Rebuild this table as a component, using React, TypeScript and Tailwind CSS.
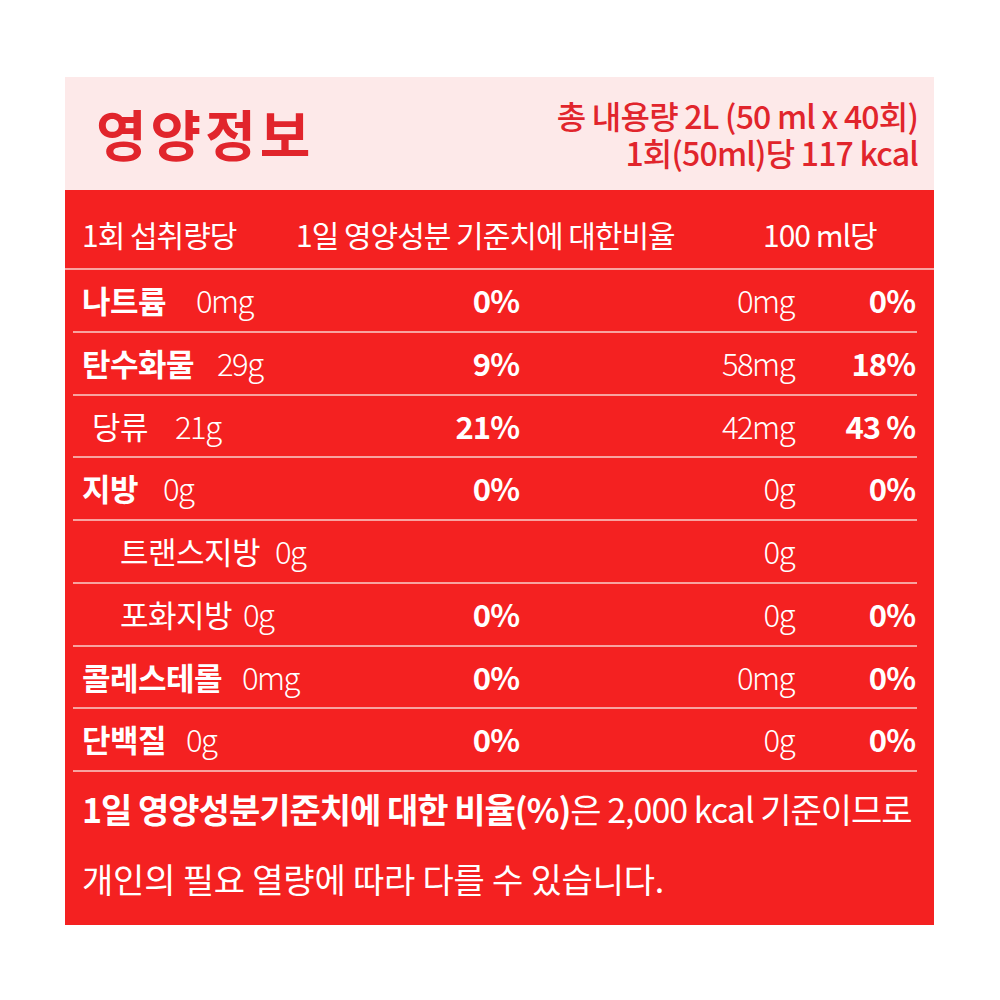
import React from "react";

const FONT = { fontFamily: '"Noto Sans CJK KR", "Noto Sans", sans-serif' };

type Row = {
  name: string;
  amount: string;
  pct: string;
  per100: string;
  pct2: string;
  indent: string;
  nameW: string;
  bold: boolean;
};

const rows: Row[] = [
  { name: "나트륨", amount: "0mg", pct: "0%", per100: "0mg", pct2: "0%", indent: "pl-[9px]", nameW: "w-[114px]", bold: true },
  { name: "탄수화물", amount: "29g", pct: "9%", per100: "58mg", pct2: "18%", indent: "pl-[9px]", nameW: "w-[135px]", bold: true },
  { name: "당류", amount: "21g", pct: "21%", per100: "42mg", pct2: "43 %", indent: "pl-[19px]", nameW: "w-[83px]", bold: false },
  { name: "지방", amount: "0g", pct: "0%", per100: "0g", pct2: "0%", indent: "pl-[9px]", nameW: "w-[81px]", bold: true },
  { name: "트랜스지방", amount: "0g", pct: "", per100: "0g", pct2: "", indent: "pl-[47px]", nameW: "w-[155px]", bold: false },
  { name: "포화지방", amount: "0g", pct: "0%", per100: "0g", pct2: "0%", indent: "pl-[47px]", nameW: "w-[123px]", bold: false },
  { name: "콜레스테롤", amount: "0mg", pct: "0%", per100: "0mg", pct2: "0%", indent: "pl-[9px]", nameW: "w-[160px]", bold: true },
  { name: "단백질", amount: "0g", pct: "0%", per100: "0g", pct2: "0%", indent: "pl-[9px]", nameW: "w-[104px]", bold: true },
];

export default function App() {
  return (
    <div className="w-[1000px] h-[1000px] bg-white pt-[77px] pl-[65px]" style={FONT}>
      <div className="w-[869px] h-[848px] flex flex-col bg-[#f42121]">
        <div className="h-[113px] shrink-0 bg-[#fde9e9] flex items-center justify-between pl-[31px] pr-[16px]">
          <div className="text-[55px] font-bold text-[#e1252c] tracking-[4px] leading-none pb-[2px]">영양정보</div>
          <div className="text-right text-[#e1252c] font-medium text-[32px] leading-[37px] tracking-[-0.8px]">
            <div>총 내용량 2L (50 ml x 40회)</div>
            <div>1회(50ml)당 117 kcal</div>
          </div>
        </div>
        <div className="h-[80px] shrink-0 flex items-center text-white text-[30px] tracking-[-1px] pl-[17px] pt-[10px] border-b-[2px] border-[#f8a3a0]">
          <div className="w-[214px] whitespace-nowrap">1회 섭취량당</div>
          <div className="w-[467px] whitespace-nowrap">1일 영양성분 기준치에 대한비율</div>
          <div className="whitespace-nowrap">100 ml당</div>
        </div>
        <div className="ml-[8px] mr-[17px] flex flex-col">
          {rows.map((r, i) => (
            <div
              key={i}
              className={`h-[62.75px] shrink-0 flex items-center text-white pr-[2px] border-b-[2px] border-[#f8a3a0] ${r.indent}`}
            >
              <div className="flex-1 flex items-center text-[31px] whitespace-nowrap">
                <span className={`inline-block ${r.nameW} ${r.bold ? "font-bold tracking-[-0.5px]" : "font-normal tracking-[-0.5px]"}`}>{r.name}</span>
                <span className="font-light tracking-[-1.5px]">{r.amount}</span>
              </div>
              <div className="w-[140px] text-right text-[31px] font-bold tracking-[-1px]">{r.pct}</div>
              <div className="w-[275px] text-right text-[31px] font-light tracking-[-1.5px]">{r.per100}</div>
              <div className="w-[121px] text-right text-[31px] font-bold tracking-[-1px]">{r.pct2}</div>
            </div>
          ))}
        </div>
        <div className="pl-[17px] pt-[2px] text-white text-[34px] leading-[70px] whitespace-nowrap">
          <div className="tracking-[-1px]">
            <span className="font-bold">1일 영양성분기준치에 대한 비율(%)</span>
            <span>은 2,000 kcal 기준이므로</span>
          </div>
          <div className="tracking-[-0.2px]">개인의 필요 열량에 따라 다를 수 있습니다.</div>
        </div>
      </div>
    </div>
  );
}
